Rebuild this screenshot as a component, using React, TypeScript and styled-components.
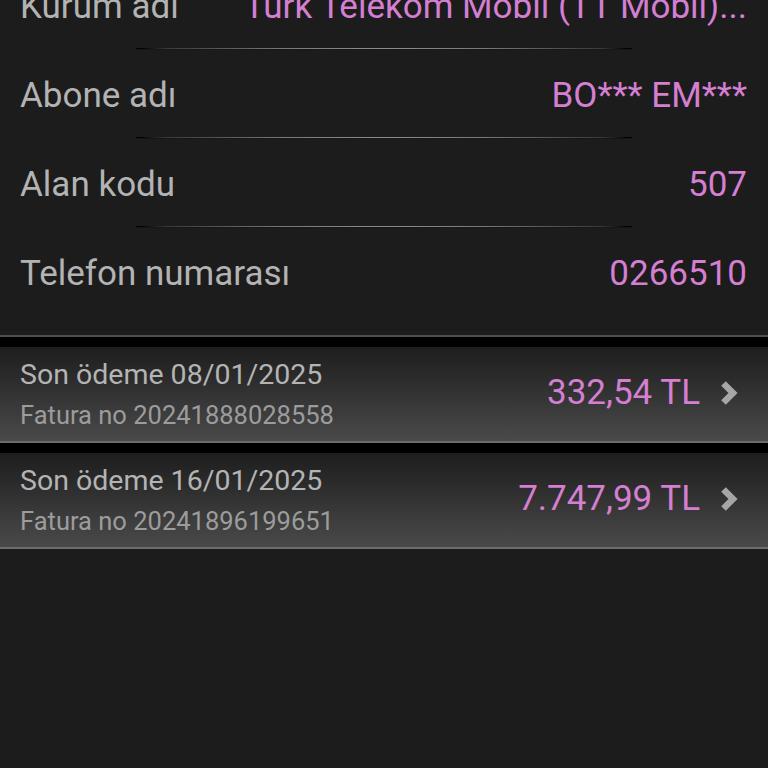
import React from 'react';
import styled, { createGlobalStyle } from 'styled-components';

const GlobalStyle = createGlobalStyle`
  html, body {
    margin: 0;
    padding: 0;
    background: #1c1c1c;
    font-family: Roboto, "Noto Sans", sans-serif;
    -webkit-font-smoothing: antialiased;
  }
  #root {
    min-height: 100vh;
    overflow: hidden;
  }
`;

const Screen = styled.div`
  width: 768px;
  min-height: 768px;
  background: #1c1c1c;
  overflow: hidden;
`;

const InfoSection = styled.section`
  margin-top: -40px;
  padding-bottom: 20px;
  border-bottom: 2px solid #4e4e4e;
`;

const Row = styled.div`
  height: 84px;
  padding: 4px 21px 0 20px;
  display: flex;
  align-items: center;
  justify-content: space-between;
  gap: 24px;
  font-size: 35px;
  white-space: nowrap;
`;

const Label = styled.span`
  color: #b3b3b3;
`;

const Value = styled.span`
  color: #d47fd1;
  overflow: hidden;
  text-overflow: ellipsis;
`;

const Divider = styled.div`
  height: 1px;
  margin: 0 136px;
  background: linear-gradient(
    to right,
    #000 0,
    #000 1%,
    #3a3a3a 6%,
    #7a7a7a 30%,
    #8c8c8c 50%,
    #7a7a7a 70%,
    #3a3a3a 94%,
    #000 99%
  );
  box-shadow: 0 1px 0 #161616;
`;

const Bill = styled.div`
  height: 94px;
  display: flex;
  align-items: center;
  justify-content: space-between;
  padding: 0 30px 0 20px;
  border-top: 10px solid #000;
  border-bottom: 2px solid #6c6c6c;
  background: linear-gradient(to bottom, #1e1e1e 0%, #2c2c2c 35%, #4a4a4a 100%);
`;

const BillInfo = styled.div`
  display: flex;
  flex-direction: column;
  gap: 9px;
`;

const BillTitle = styled.span`
  color: #b4b4b4;
  font-size: 28.5px;
  line-height: 33px;
`;

const BillNo = styled.span`
  color: #9c9c9c;
  font-size: 25.5px;
  line-height: 30px;
`;

const Amount = styled.div`
  display: flex;
  align-items: center;
  gap: 20px;
  color: #d47fd1;
  font-size: 35px;
  margin-top: -3px;
`;

const Chevron = () => (
  <svg width="18" height="26" viewBox="0 0 18 26">
    <path
      d="M3.5 3.5 L13 13 L3.5 22.5"
      fill="none"
      stroke="#a6a6a6"
      strokeWidth="6.5"
      strokeLinejoin="miter"
    />
  </svg>
);

const info = [
  { label: 'Kurum adı', value: 'Türk Telekom Mobil (TT Mobil)...' },
  { label: 'Abone adı', value: 'BO*** EM***' },
  { label: 'Alan kodu', value: '507' },
  { label: 'Telefon numarası', value: '0266510' },
];

const bills = [
  { due: '08/01/2025', no: '20241888028558', amount: '332,54 TL' },
  { due: '16/01/2025', no: '20241896199651', amount: '7.747,99 TL' },
];

export default function App() {
  return (
    <>
      <GlobalStyle />
      <Screen>
        <InfoSection>
          {info.map((item, i) => (
            <React.Fragment key={item.label}>
              {i > 0 && <Divider />}
              <Row>
                <Label>{item.label}</Label>
                <Value>{item.value}</Value>
              </Row>
            </React.Fragment>
          ))}
        </InfoSection>
        {bills.map((bill) => (
          <Bill key={bill.no}>
            <BillInfo>
              <BillTitle>Son ödeme {bill.due}</BillTitle>
              <BillNo>Fatura no {bill.no}</BillNo>
            </BillInfo>
            <Amount>
              {bill.amount}
              <Chevron />
            </Amount>
          </Bill>
        ))}
      </Screen>
    </>
  );
}
